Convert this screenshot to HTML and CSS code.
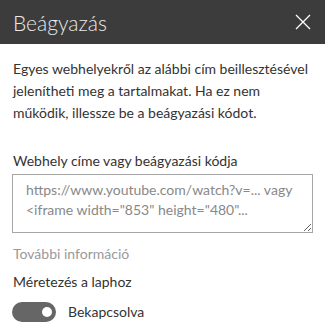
FILE: index.html
```html
<!DOCTYPE html>
<html>
<head>
<meta charset="utf-8">
<link rel="stylesheet" href="styles.css">
</head>
<body>
<div class="panel">
  <header class="header">
    <h1 class="title">Beágyazás</h1>
    <button class="close" aria-label="Bezárás">
      <svg width="16" height="16" viewBox="0 0 16 16"><path d="M1 1L15 15M15 1L1 15" stroke="#ffffff" stroke-width="1.3" fill="none"/></svg>
    </button>
  </header>
  <div class="content">
    <p class="intro">Egyes webhelyekről az alábbi cím beillesztésével<br>jelenítheti meg a tartalmakat. Ha ez nem<br>működik, illessze be a beágyazási kódot.</p>
    <label class="label" for="code">Webhely címe vagy beágyazási kódja</label>
    <textarea id="code" class="field" placeholder="https://www.youtube.com/watch?v=... vagy&#10;&lt;iframe width=&quot;853&quot; height=&quot;480&quot;..."></textarea>
    <a class="more" href="#">További információ</a>
    <div class="label2">Méretezés a laphoz</div>
    <div class="toggle-row">
      <span class="toggle"><span class="knob"></span></span>
      <span class="toggle-text">Bekapcsolva</span>
    </div>
  </div>
</div>
</body>
</html>
```
FILE: styles.css
```css
html, body {
  margin: 0;
  padding: 0;
  background: #ffffff;
}
body {
  font-family: Lato, "Open Sans", sans-serif;
  color: #333333;
  width: 325px;
  height: 330px;
  overflow: hidden;
}
.header {
  height: 44px;
  background: #3c3c3c;
  display: flex;
  align-items: center;
  justify-content: space-between;
  padding: 0 14px 0 13px;
}
.title {
  margin: 0;
  font-size: 21px;
  font-weight: 300;
  color: #eaeaea;
  line-height: 1;
}
.close {
  background: none;
  border: 0;
  padding: 0;
  width: 16px;
  height: 16px;
  display: flex;
}
.content {
  padding: 14px 13px 0 13px;
  display: flex;
  flex-direction: column;
  align-items: flex-start;
}
.intro {
  margin: 0;
  font-size: 14px;
  line-height: 22px;
  white-space: nowrap;
}
.label {
  margin-top: 27px;
  font-size: 14px;
  line-height: 20px;
}
.field {
  box-sizing: border-box;
  margin: 3px 0 0 -1px;
  width: 301px;
  height: 59px;
  border: 1px solid #a6a6a6;
  padding: 5px 4px 5px 13px;
  font-family: inherit;
  font-size: 14px;
  line-height: 20px;
  resize: vertical;
  display: block;
  overflow: hidden;
}
.field::placeholder {
  color: #888888;
  white-space: pre;
}
.more {
  margin-top: 11px;
  font-size: 14px;
  line-height: 20px;
  color: #999999;
  text-decoration: none;
}
.label2 {
  margin-top: 8px;
  font-size: 14px;
  line-height: 20px;
}
.toggle-row {
  margin-top: 10px;
  display: flex;
  align-items: center;
  gap: 12px;
}
.toggle {
  box-sizing: border-box;
  margin-left: -1px;
  width: 44px;
  height: 20px;
  border-radius: 10px;
  background: #666666;
  display: flex;
  align-items: center;
  justify-content: flex-end;
  padding-right: 4px;
}
.knob {
  width: 10px;
  height: 10px;
  border-radius: 50%;
  background: #ffffff;
}
.toggle-text {
  font-size: 14px;
  line-height: 20px;
}
```
